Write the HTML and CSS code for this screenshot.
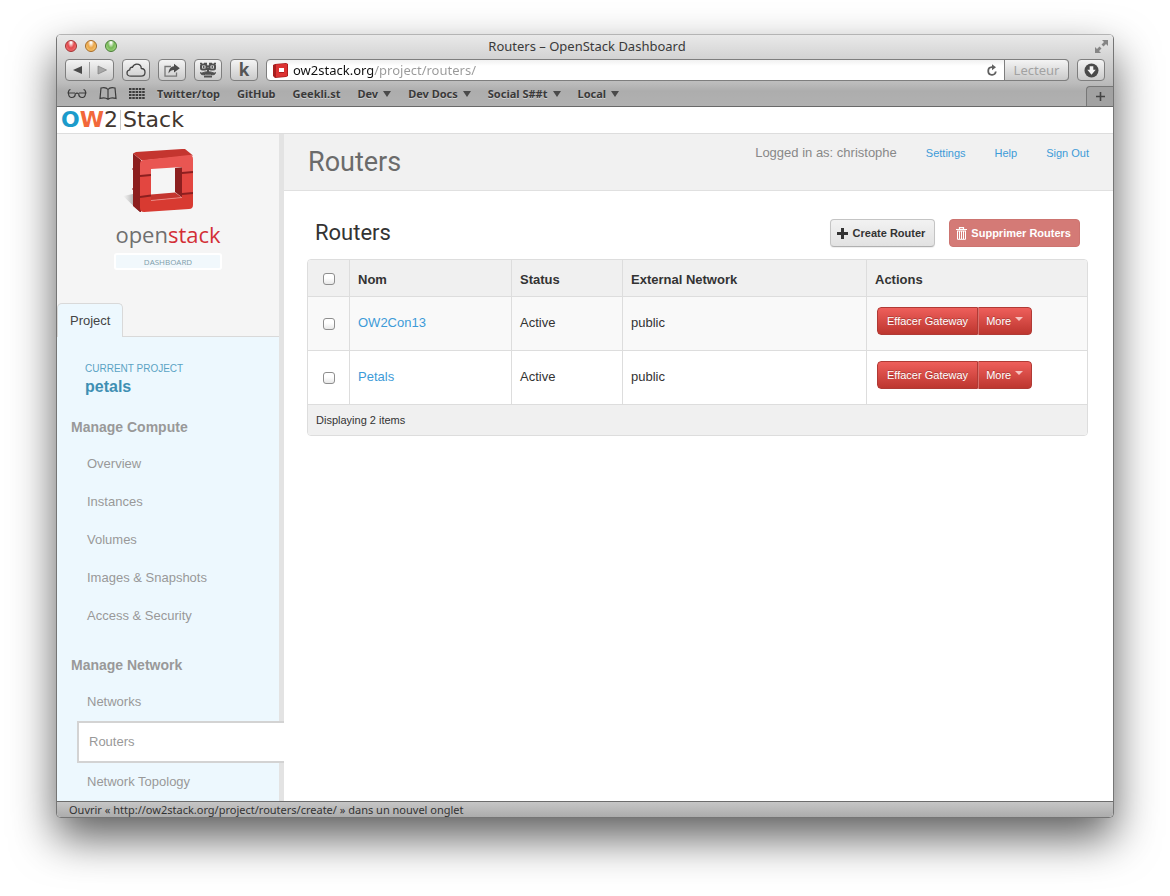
FILE: index.html
```html
<!DOCTYPE html>
<html lang="fr">
<head>
<meta charset="utf-8">
<title>Routers – OpenStack Dashboard</title>
<link rel="stylesheet" href="styles.css">
</head>
<body>
<div class="window">
  <header class="chrome">
    <div class="titlebar">
      <div class="lights">
        <button class="light light-red" aria-label="Close"></button>
        <button class="light light-amber" aria-label="Minimize"></button>
        <button class="light light-green" aria-label="Zoom"></button>
      </div>
      <div class="window-title">Routers – OpenStack Dashboard</div>
      <button class="fullscreen" aria-label="Full screen">
        <svg width="15" height="15" viewBox="0 0 15 15"><path fill="#858585" d="M8 1h6v6l-2-2-2.500 2.500L7.500 5.500 10 3zM1 8l2 2 2.500-2.500 2 2L5 12l2 2H1z"/></svg>
      </button>
    </div>
    <div class="toolbar">
      <div class="nav">
        <button class="nav-button" aria-label="Back"><svg width="10" height="10" viewBox="0 0 10 10"><path d="M0 5l9-4v8z" fill="#4a4a4a"/></svg></button>
        <button class="nav-button" aria-label="Forward"><svg width="10" height="10" viewBox="0 0 10 10"><path d="M9.500 5L1 1v8z" fill="#a8a8a8" stroke="#808080" stroke-width=".7"/></svg></button>
      </div>
      <button class="tool" aria-label="iCloud tabs"><svg width="20" height="15" viewBox="0 0 20 15"><path d="M5 13.200C2.500 13.200 1 11.900 1 9.900 1 8 2.200 7 3.800 6.800 3.700 5 5 4 6.500 4.300 7.300 2.200 9 1.200 10.800 1.200c2.600 0 4.400 1.800 4.500 4.300 2.300.1 3.700 1.700 3.700 3.800 0 2.400-1.600 3.900-3.900 3.900z" fill="none" stroke="#444" stroke-width="1.300"/></svg></button>
      <button class="tool" aria-label="Share"><svg width="18" height="15" viewBox="0 0 18 15"><path d="M8 3.500H2v9.700h11.500V9.500" fill="none" stroke="#777" stroke-width="1.300"/><path d="M11 .8l5.800 4.400L11 9.500V7C8.500 7 7 8 5.500 10.500 5.700 6 8 3.500 11 3.300z" fill="#4c4c4c"/></svg></button>
      <button class="tool" aria-label="Reader face"><svg width="18" height="17" viewBox="0 0 18 17"><g fill="none" stroke="#505050"><path d="M1 1.500h2M5 1.500h3M10 1.500h3M15 1.500h2" stroke-width="1.500"/><rect x="2" y="2.500" width="5.500" height="5" rx="1.500" stroke-width="2"/><rect x="10.500" y="2.500" width="5.500" height="5" rx="1.500" stroke-width="2"/><path d="M7.500 4.500h3M9 6v4" stroke-width="2"/><path d="M1.500 10.500c1.500 1.500 3-.8 7.500-.8s6 2.300 7.500.8c0 2-2.500 3-5 1.700h-5c-2.500 1.300-5 .3-5-1.700z" fill="#505050" stroke-width="1"/><path d="M5 14.500h8" stroke-width="2"/></g><circle cx="4.700" cy="5" r="1" fill="#505050"/><circle cx="13.300" cy="5" r="1" fill="#505050"/></svg></button>
      <button class="tool tool-k">k</button>
      <div class="address">
        <svg width="15" height="15" viewBox="0 0 15 15"><path d="M2 1l11-1 2 1v12l-2 1-11 1-2-2V2z" fill="#a81e1e"/><path d="M3 1.500l11-.7v12.500L3 14z" fill="#dc3232"/><path d="M6 5h5v5H6z" fill="#fff"/><path d="M6 9h5v1H6z" fill="#a81e1e"/></svg>
        <input class="url" type="text" aria-label="Address" value="ow2stack.org/project/routers/">
        <button class="reload" aria-label="Reload"><svg width="12" height="13" viewBox="0 0 12 13"><path d="M7.500 3.200H5.800A3.800 3.800 0 1 0 9.800 7.500" fill="none" stroke="#606060" stroke-width="1.800"/><path d="M6 .2v6L10 3.200z" fill="#606060"/></svg></button>
        <button class="lecteur" disabled>Lecteur</button>
      </div>
      <button class="tool" aria-label="Downloads"><svg width="15" height="15" viewBox="0 0 15 15"><circle cx="7.500" cy="7.500" r="7" fill="#4a4a4a"/><path d="M5.700 3.200h3.600v3.600h2.400L7.500 11.800 3.300 6.800h2.400z" fill="#f4f4f4"/></svg></button>
    </div>
    <nav class="bookmarks">
      <button class="mark" aria-label="Reading list"><svg width="20" height="12" viewBox="0 0 20 12"><g fill="none" stroke="#3c3c3c" stroke-width="1.200"><path d="M3.500 1.500C2 1.500 1.500 2.500 1.200 5M16.500 1.500c1.500 0 2 1 2.300 3.500M.5 5H8M12 5h7.500"/><path d="M1.500 5c0 3 1 4.500 3.200 4.500S8.300 8 8.300 5.500M18.500 5c0 3-1 4.500-3.200 4.500S11.700 8 11.700 5.500M8.300 6c.8-1.200 2.600-1.200 3.400 0"/></g></svg></button>
      <button class="mark" aria-label="Bookmarks"><svg width="18" height="13" viewBox="0 0 18 13"><path d="M9 2.500C7.500.5 4 .5 2 1L1 11.500c2.500-.8 6-.8 8 .8 2-1.600 5.500-1.600 8-.8L16 1c-2-.5-5.500-.5-7 1.500zM9 2.500v9.800" fill="none" stroke="#3c3c3c" stroke-width="1.200"/></svg></button>
      <button class="mark" aria-label="Top sites"><svg width="16" height="12" viewBox="0 0 16 12"><path d="M0 1h16M0 4h16M0 7h16M0 10h16" stroke="#3c3c3c" stroke-width="2" stroke-dasharray="2.500 .8"/></svg></button>
      <a href="#">Twitter/top</a>
      <a href="#">GitHub</a>
      <a href="#">Geekli.st</a>
      <a href="#" class="folder">Dev</a>
      <a href="#" class="folder">Dev Docs</a>
      <a href="#" class="folder">Social S##t</a>
      <a href="#" class="folder">Local</a>
      <button class="new-tab" aria-label="New tab"><svg width="9" height="9" viewBox="0 0 9 9"><path d="M4.500 0v9M0 4.500h9" stroke="#444" stroke-width="1.600"/></svg></button>
    </nav>
  </header>

  <div class="brand"><span class="brand-o">O</span><span class="brand-w">W</span>2<span class="brand-rule"></span>Stack</div>

  <div class="page">
    <aside class="sidebar">
      <div class="logo">
        <svg width="86" height="66" viewBox="0 0 86 66">
          <defs>
            <linearGradient id="shade" x1="0" x2="1"><stop offset="0" stop-color="#999" stop-opacity="0"/><stop offset="1" stop-color="#555" stop-opacity=".8"/></linearGradient>
          </defs>
          <path d="M7 47l10-2 7 18z" fill="url(#shade)"/>
          <path d="M17 4.500l3-1.500 46-3h3l8 6.500-51 5z" fill="#c4352f"/>
          <path d="M17 4.500l8 6.500v52h-1l-7-6V41l-1-1 1-1V21l-1-1 1-1z" fill="#8c1f1f"/>
          <path d="M24 15q0-4 4-4l45-5q4 0 4 4v13l-11 1v-6l-31 2v6l-11 1z" fill="#e95652"/>
          <path d="M24 27l11-1v20l-11 2zM66 24l11-1v21l-11 1z" fill="#e34640"/>
          <path d="M24 48l11-2v5.500l31-3V45l11-1v12q0 4-4 4l-45 3q-4 0-4-4z" fill="#d83a31"/>
          <path d="M59 19l7-.7v30.200L59 43z" fill="#8c1f1f"/>
          <path d="M35 45.500l24-2 7 5-31 3z" fill="#c4352f"/>
          <path d="M24 27l11-1M24 48l11-1.500M66 24l11-1M66 45l11-1" stroke="#8c1f1f" stroke-width="1.800"/>
          <path d="M35 51.500l31-3" stroke="#f0908c" stroke-width=".8"/>
        </svg>
        <div class="wordmark">open<span>stack</span></div>
        <div class="badge">DASHBOARD</div>
      </div>
      <div class="tabs"><a class="tab" href="#">Project</a></div>
      <div class="menu">
        <div class="current">
          <div class="current-label">CURRENT PROJECT</div>
          <h3>petals</h3>
        </div>
        <h4>Manage Compute</h4>
        <ul>
          <li><a href="#">Overview</a></li>
          <li><a href="#">Instances</a></li>
          <li><a href="#">Volumes</a></li>
          <li><a href="#">Images &amp; Snapshots</a></li>
          <li><a href="#">Access &amp; Security</a></li>
        </ul>
        <h4>Manage Network</h4>
        <ul>
          <li><a href="#">Networks</a></li>
          <li><a href="#" class="active">Routers</a></li>
          <li><a href="#">Network Topology</a></li>
        </ul>
      </div>
    </aside>
    <main class="main">
      <div class="page-header">
        <h1>Routers</h1>
        <div class="user">
          <span>Logged in as: christophe</span>
          <a href="#">Settings</a>
          <a href="#">Help</a>
          <a href="#">Sign Out</a>
        </div>
      </div>
      <div class="content">
        <div class="table-head">
          <h2>Routers</h2>
          <div class="table-actions">
            <button class="btn btn-plain"><svg width="11" height="11" viewBox="0 0 11 11"><path d="M5.500 0v11M0 5.500h11" stroke="#333" stroke-width="3"/></svg>Create Router</button>
            <button class="btn btn-muted"><svg width="11" height="13" viewBox="0 0 11 13"><path d="M3.500 2V.7h4V2M0 2.500h11" fill="none" stroke="#fff" stroke-width="1.200"/><path d="M1.500 4v8.300h8V4M3.500 4v8M5.500 4v8M7.500 4v8M1 4h9" fill="none" stroke="#fff"/></svg>Supprimer Routers</button>
          </div>
        </div>
        <table>
          <colgroup><col class="col-check"><col class="col-name"><col class="col-status"><col class="col-network"><col></colgroup>
          <thead>
            <tr><th class="check"><input type="checkbox" aria-label="Select all"></th><th>Nom</th><th>Status</th><th>External Network</th><th>Actions</th></tr>
          </thead>
          <tbody>
            <tr class="odd"><td class="check"><input type="checkbox" aria-label="Select OW2Con13"></td><td><a href="#">OW2Con13</a></td><td>Active</td><td>public</td><td class="actions"><div class="group"><button class="btn-danger">Effacer Gateway</button><button class="btn-danger more">More</button></div></td></tr>
            <tr><td class="check"><input type="checkbox" aria-label="Select Petals"></td><td><a href="#">Petals</a></td><td>Active</td><td>public</td><td class="actions"><div class="group"><button class="btn-danger">Effacer Gateway</button><button class="btn-danger more">More</button></div></td></tr>
          </tbody>
          <tfoot><tr><td colspan="5">Displaying 2 items</td></tr></tfoot>
        </table>
      </div>
    </main>
  </div>
  <footer class="status">Ouvrir « http://ow2stack.org/project/routers/create/ » dans un nouvel onglet</footer>
</div>
</body>
</html>
```

FILE: styles.css
```css
* { box-sizing: border-box; }

body {
  margin: 0;
  padding: 34px 56px 78px;
  min-height: 100vh;
  display: flex;
  flex-direction: column;
  background: #fff;
  color: #333;
  font: 13px/18px "Liberation Sans", Arial, sans-serif;
}

a { color: #3d9bd8; text-decoration: none; }
button { font: inherit; color: inherit; padding: 0; border: 0; background: none; }
svg { display: block; flex: none; }
h1, h2, h3, h4, ul { margin: 0; padding: 0; }

.window {
  flex: 1;
  display: flex;
  flex-direction: column;
  border: 1px solid #757575;
  border-top-color: #b4b4b4;
  border-radius: 5px;
  overflow: hidden;
  background: #fff;
  box-shadow: 0 20px 44px rgba(0, 0, 0, .63);
}

/* Browser chrome */
.chrome {
  background: linear-gradient(#e9e9e9, #bcbcbc 48px, #adadad 56px, #b1b1b1);
  border-bottom: 1px solid #696969;
  color: #3a3a3a;
  font-family: "Noto Sans", "Open Sans", sans-serif;
}
.titlebar { display: grid; grid-template-columns: 1fr auto 1fr; align-items: center; height: 24px; padding: 0 4px 2px 8px; }
.lights { display: flex; gap: 8px; }
.light { width: 12px; height: 12px; border-radius: 50%; border: 1px solid; }
.light-red { border-color: #a23030; background: radial-gradient(ellipse at 50% 15%, #fff 5%, #e4484c 45%, #f6898a); }
.light-amber { border-color: #a76a25; background: radial-gradient(ellipse at 50% 15%, #fff 5%, #eba547 45%, #fbd98a); }
.light-green { border-color: #477c34; background: radial-gradient(ellipse at 50% 15%, #fff 5%, #76b956 45%, #b9e89b); }
.window-title { font-size: 13px; }
.fullscreen { justify-self: end; }

.toolbar { display: flex; gap: 8px; height: 22px; padding: 0 8px; }
.nav, .tool, .lecteur {
  background: linear-gradient(#f4f4f4, #cacaca);
  border: 1px solid #7e7e7e;
  border-radius: 4px;
}
.nav { display: flex; align-items: center; width: 49px; }
.nav-button { flex: 1; height: 16px; display: flex; align-items: center; justify-content: center; }
.nav-button + .nav-button { border-left: 1px solid #9c9c9c; }
.tool { width: 28px; display: flex; align-items: center; justify-content: center; }
.tool-k { font: bold 17px/18px "Open Sans", sans-serif; color: #555; }
.address {
  flex: 1;
  display: flex;
  align-items: center;
  padding-left: 6px;
  border: 1px solid #7e7e7e;
  border-radius: 4px;
  background: linear-gradient(#f1f1f1, #fff 6px);
}
.url {
  flex: 1;
  min-width: 0;
  height: 20px;
  padding: 0;
  margin-left: 5px;
  border: 0;
  outline: 0;
  color: transparent;
  font: 13px/20px "Noto Sans", "Open Sans", sans-serif;
  background: linear-gradient(90deg, #111 80px, #999 80px);
  background-clip: text;
}
.reload { margin: 0 7px; }
.lecteur { align-self: stretch; width: 65px; margin: -1px; border-radius: 0 4px 4px 0; color: #a2a2a2; font-size: 13px; }

.bookmarks { display: flex; align-items: center; gap: 17px; height: 25px; padding-left: 10px; font-size: 11px; font-weight: bold; }
.bookmarks a { color: #3a3a3a; text-shadow: 0 1px 0 #cfcfcf; white-space: nowrap; }
.mark { margin-right: -5px; }
.folder::after {
  content: "";
  display: inline-block;
  margin-left: 5px;
  border: 4px solid transparent;
  border-top: 6px solid #4a4a4a;
  border-bottom: 0;
  vertical-align: 1px;
}
.new-tab {
  align-self: flex-end;
  display: flex;
  align-items: center;
  justify-content: center;
  width: 27px;
  height: 20px;
  margin-left: auto;
  border: 1px solid #777;
  border-width: 1px 0 0 1px;
  border-radius: 4px 0 0 0;
  background: #a2a2a2;
}

/* Site banner */
.brand {
  display: flex;
  align-items: center;
  height: 27px;
  padding-left: 4px;
  border-bottom: 1px solid #ddd;
  color: #41362f;
  font: 22px/26px "DejaVu Sans", sans-serif;
}
.brand-o, .brand-w { font-weight: bold; }
.brand-o { color: #1c9bcb; }
.brand-w { color: #f2683a; }
.brand-rule { width: 1px; height: 20px; margin: 0 2px; background: #ccc; }

/* Page */
.page { flex: 1; display: flex; }
.sidebar { flex: none; width: 227px; display: flex; flex-direction: column; background: #f5f5f5; border-right: 5px solid #e3e3e3; }
.logo { display: flex; flex-direction: column; align-items: center; height: 169px; padding-top: 15px; }
.logo svg { margin-right: 18px; }
.wordmark { color: #6f6f6f; font: 22px/38px "Open Sans", sans-serif; }
.wordmark span { color: #d32f36; }
.badge {
  width: 108px;
  border: 2px solid #fff;
  border-radius: 3px;
  background: #f1f8fc;
  color: #7e9dab;
  font: 8px/13px "Open Sans", sans-serif;
  text-align: center;
}
.tabs { display: flex; height: 34px; border-bottom: 1px solid #d9d9d9; }
.tab {
  height: 34px;
  padding: 0 12px;
  border: 1px solid #d9d9d9;
  border-bottom: 0;
  border-radius: 5px 5px 0 0;
  background: #edf8fe;
  color: #444;
  line-height: 34px;
}
.menu { flex: 1; background: #edf8fe; }
.current { padding: 23px 0 0 28px; color: #3f8fb3; }
.current-label { font-size: 10px; color: #5ba3c4; }
.current h3 { font-size: 16px; line-height: 18px; }
.menu h4 { padding: 20px 0 8px 14px; color: #999; font-size: 14px; line-height: 20px; }
.menu .current + h4 { padding-top: 21px; }
.menu ul { list-style: none; }
.menu li { padding-left: 20px; }
.menu li a { display: block; padding-left: 10px; color: #999; line-height: 38px; }
.menu li .active { margin-right: -5px; background: #fff; border: 2px solid #d3d3d3; border-right: 0; }

.main { flex: 1; min-width: 0; }
.page-header {
  display: flex;
  justify-content: space-between;
  height: 57px;
  padding: 10px 24px 0;
  border-bottom: 1px solid #e0e0e0;
  background: #f1f1f1;
}
h1, h2 { font-family: Roboto, sans-serif; font-weight: normal; }
h1 { color: #6b6b6b; font-size: 27px; line-height: 36px; }
h2 { font-size: 22px; line-height: 28px; }
.user { display: flex; gap: 29px; color: #888; }
.user a { font-size: 11px; }

.content { padding: 28px 25px 28px 23px; }
.table-head { display: flex; justify-content: space-between; padding: 0 8px 12px; }
.table-actions { display: flex; gap: 14px; }
.btn {
  display: flex;
  align-items: center;
  gap: 5px;
  height: 28px;
  padding: 0 9px 0 6px;
  border: 1px solid #c4c4c4;
  border-radius: 4px;
  font-size: 11px;
  font-weight: bold;
}
.btn-plain { background: linear-gradient(#f2f2f2, #e2e2e2); border-bottom-color: #b0b0b0; box-shadow: 0 1px 1px #eee; }
.btn-muted { gap: 4px; padding: 0 8px 0 6px; background: #d47a76; border-color: #cc7470; color: #fff; }

table { width: 100%; table-layout: fixed; border: 1px solid #ddd; border-radius: 4px; border-collapse: separate; border-spacing: 0; overflow: hidden; }
.col-check { width: 41px; }
.col-name { width: 162px; }
.col-status { width: 111px; }
.col-network { width: 244px; }
th, td { padding: 0 8px; text-align: left; vertical-align: top; }
th { padding-top: 11px; height: 36px; background: #f0f0f0; }
td { padding-top: 17px; height: 54px; border-top: 1px solid #ddd; }
th + th, td + td { border-left: 1px solid #ddd; }
.odd td { background: #f9f9f9; }
.check { text-align: center; }
.check input {
  appearance: none;
  width: 12px;
  height: 12px;
  margin: 2px 0 0;
  border: 1px solid #8e8e8e;
  border-radius: 3px;
  background: linear-gradient(#fff 40%, #e8e8e8);
  vertical-align: top;
}
td.check input { margin-top: 4px; }
tfoot td { height: 31px; padding-top: 6px; background: #f0f0f0; font-size: 11px; }
td.actions { padding: 10px 10px 0; }
.group { display: inline-flex; border-radius: 4px; overflow: hidden; }
.btn-danger {
  height: 28px;
  padding: 0 9px;
  border: 1px solid #b03a35;
  border-radius: 4px 0 0 4px;
  background: linear-gradient(#ee5f5b, #bd362f);
  color: #fff;
  font-size: 11px;
  text-shadow: 0 -1px 0 rgba(0, 0, 0, .25);
}
.more { padding: 0 8px 0 7px; border-left-color: #d8706c; border-radius: 0 4px 4px 0; }
.more::after {
  content: "";
  display: inline-block;
  margin-left: 4px;
  border: 4px solid transparent;
  border-top-color: #f6c4c2;
  border-bottom: 0;
  vertical-align: 4px;
}

.status {
  height: 16px;
  padding-left: 12px;
  border-top: 1px solid #6c6c6c;
  background: linear-gradient(#c6c6c6, #acacac);
  color: #333;
  font: 11px/15px "Noto Sans", "Open Sans", sans-serif;
}
```
